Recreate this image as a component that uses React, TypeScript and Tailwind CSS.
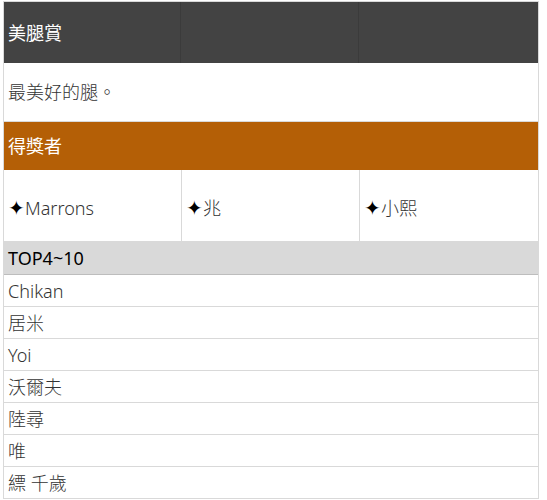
const top = ['Chikan', '居米', 'Yoi', '沃爾夫', '陸尋', '唯', '縹 千歲']
const winners = ['✦Marrons', '✦兆', '✦小熙']

export default function App() {
  return (
    <div
      className="bg-white min-h-[500px] pt-px pl-[3px] text-[18px] leading-none"
      style={{ fontFamily: '"Noto Sans", "Noto Sans CJK TC", sans-serif' }}
    >
      <div className="w-[536px] border border-[#d9d9d9] border-b-0">
        <div className="flex h-[61px] bg-[#434343] text-white">
          <div className="w-[177px] flex items-center pl-1 border-r border-[#3b3b3b]">美腿賞</div>
          <div className="w-[178px] border-r border-[#3b3b3b]" />
          <div className="flex-1" />
        </div>
        <div className="h-[59px] flex items-center pl-1 border-b border-[#d9d9d9] text-[#333] font-light">最美好的腿。</div>
        <div className="h-[48px] flex items-center pl-1 bg-[#b45f06] text-white">得獎者</div>
        <div className="flex h-[72px] border-b border-[#d9d9d9] text-[#333] font-light">
          {winners.map((w, i) => (
            <div
              key={w}
              className={i < 2 ? 'w-[178px] flex items-center pl-1 pt-1 border-r border-[#d9d9d9]' : 'flex-1 flex items-center pl-1 pt-1'}
            >
              <span className="text-black text-[20px] font-normal">{w.slice(0, 1)}</span>
              {w.slice(1)}
            </div>
          ))}
        </div>
        <div className="h-[33px] flex items-center pl-1 bg-[#d9d9d9] border-b border-[#bdbdbd] text-black">TOP4~10</div>
        {top.map((n) => (
          <div key={n} className="h-[32px] flex items-center pl-1 border-b border-[#d9d9d9] text-[#333] font-light">
            {n}
          </div>
        ))}
      </div>
    </div>
  )
}
